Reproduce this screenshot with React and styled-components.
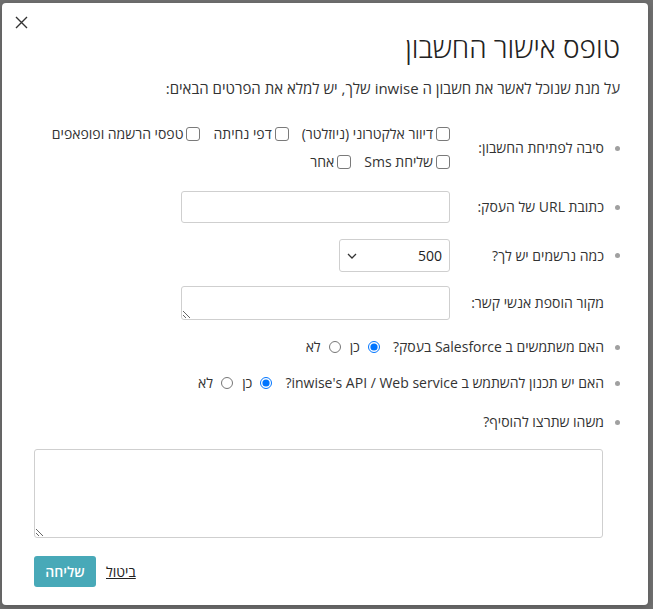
import React from "react";
import styled, { createGlobalStyle } from "styled-components";

const GlobalStyle = createGlobalStyle`
  html, body {
    margin: 0;
    padding: 0;
    background: #717171;
  }
  body {
    font-family: "Open Sans", "Liberation Sans", "DejaVu Sans", sans-serif;
    color: #333;
  }
`;

const Page = styled.div`
  padding: 3px 5px 5px 2px;
  min-height: 100vh;
  box-sizing: border-box;
`;

const Modal = styled.div`
  direction: rtl;
  background: #fff;
  border-radius: 4px;
  box-shadow: 0 2px 8px rgba(0, 0, 0, 0.25);
`;

const Header = styled.div`
  display: flex;
  justify-content: flex-end;
  padding: 12px 12px 0;
`;

const CloseButton = styled.button`
  display: flex;
  align-items: center;
  justify-content: center;
  width: 14px;
  height: 14px;
  padding: 0;
  border: none;
  background: none;
  cursor: pointer;
`;

const Body = styled.div`
  padding: 0 28px 18px 32px;
`;

const Title = styled.h2`
  margin: 3px 0 0;
  font-size: 28px;
  line-height: 31px;
  font-weight: 300;
  color: #222;
`;

const Intro = styled.p`
  margin: 15px 0 0;
  font-size: 15px;
  line-height: 20px;
  color: #333;
`;

const FieldList = styled.ul`
  list-style: none;
  margin: 26px 0 0;
  padding: 0;
`;

const Item = styled.li`
  display: flex;
  align-items: center;
  margin-bottom: ${(p) => p.$gap ?? 16}px;
  font-size: 14px;
`;

const Bullet = styled.span`
  flex-shrink: 0;
  width: 5px;
  height: 5px;
  border-radius: 50%;
  background: #a0a0a0;
  margin-left: 11px;
  visibility: ${(p) => (p.$hidden ? "hidden" : "visible")};
`;

const Label = styled.span`
  flex-shrink: 0;
  width: 148px;
  margin-left: 6px;
  line-height: 20px;
`;

const InlineLabel = styled.span`
  line-height: 20px;
`;

const CheckGroup = styled.div`
  display: flex;
  flex-direction: column;
  gap: 8px;
`;

const CheckRow = styled.div`
  display: flex;
  gap: 13px;
`;

const Option = styled.label`
  display: inline-flex;
  align-items: center;
  gap: 3px;
  line-height: 20px;
  white-space: nowrap;
`;

const CheckBox = styled.input.attrs({ type: "checkbox" })`
  appearance: none;
  width: 14px;
  height: 14px;
  margin: 0;
  border: 1px solid #7a7a7a;
  border-radius: 3px;
  background: #fff;
  box-sizing: border-box;
`;

const RadioGroup = styled.div`
  display: flex;
  gap: 9px;
  margin-right: 13px;
`;

const Radio = styled.input.attrs({ type: "radio" })`
  width: 12px;
  height: 12px;
  margin: 0 0 0 5px;
`;

const TextInput = styled.input`
  width: 269px;
  height: 32px;
  box-sizing: border-box;
  border: 1px solid #cfcfcf;
  border-radius: 3px;
  padding: 0 8px;
  font: inherit;
`;

const SelectBox = styled.div`
  display: flex;
  align-items: center;
  justify-content: space-between;
  width: 111px;
  height: 33px;
  box-sizing: border-box;
  border: 1px solid #cfcfcf;
  border-radius: 3px;
  padding: 0 7px 0 7px;
  font-size: 14px;
  color: #222;
`;

const SmallArea = styled.textarea`
  width: 269px;
  height: 34px;
  box-sizing: border-box;
  border: 1px solid #cfcfcf;
  border-radius: 3px;
  padding: 4px 8px;
  font: inherit;
`;

const BigArea = styled.textarea`
  display: block;
  width: calc(100% - 17px);
  height: 89px;
  margin: 0 17px 0 0;
  box-sizing: border-box;
  border: 1px solid #cfcfcf;
  border-radius: 3px;
  padding: 6px 8px;
  font: inherit;
`;

const Footer = styled.div`
  display: flex;
  justify-content: flex-end;
  align-items: center;
  gap: 10px;
  margin-top: 18px;
`;

const CancelLink = styled.a`
  font-size: 14px;
  color: #222;
  text-decoration: underline;
  cursor: pointer;
`;

const SubmitButton = styled.button`
  width: 62px;
  height: 31px;
  border: none;
  border-radius: 3px;
  background: #48a9b8;
  color: #fff;
  font: inherit;
  font-size: 14px;
  font-weight: 600;
  cursor: pointer;
`;

const CloseIcon = () => (
  <svg width="13" height="13" viewBox="0 0 13 13">
    <path d="M1 1 L12 12 M12 1 L1 12" stroke="#333" strokeWidth="1.4" fill="none" />
  </svg>
);

const Chevron = () => (
  <svg width="10" height="6" viewBox="0 0 10 6">
    <path d="M1 1 L5 5 L9 1" stroke="#333" strokeWidth="1.3" fill="none" />
  </svg>
);

const YesNo = ({ name }) => (
  <RadioGroup>
    <Option>
      <Radio name={name} defaultChecked />
      כן
    </Option>
    <Option>
      <Radio name={name} />
      לא
    </Option>
  </RadioGroup>
);

export default function App() {
  return (
    <>
      <GlobalStyle />
      <Page>
        <Modal>
          <Header>
            <CloseButton aria-label="סגירה">
              <CloseIcon />
            </CloseButton>
          </Header>
          <Body>
            <Title>טופס אישור החשבון</Title>
            <Intro>על מנת שנוכל לאשר את חשבון ה inwise שלך, יש למלא את הפרטים הבאים:</Intro>
            <FieldList>
              <Item $gap={19}>
                <Bullet />
                <Label>סיבה לפתיחת החשבון:</Label>
                <CheckGroup>
                  <CheckRow>
                    <Option>
                      <CheckBox />
                      דיוור אלקטרוני (ניוזלטר)
                    </Option>
                    <Option>
                      <CheckBox />
                      דפי נחיתה
                    </Option>
                    <Option>
                      <CheckBox />
                      טפסי הרשמה ופופאפים
                    </Option>
                  </CheckRow>
                  <CheckRow>
                    <Option>
                      <CheckBox />
                      שליחת Sms
                    </Option>
                    <Option>
                      <CheckBox />
                      אחר
                    </Option>
                  </CheckRow>
                </CheckGroup>
              </Item>
              <Item $gap={16}>
                <Bullet />
                <Label>כתובת URL של העסק:</Label>
                <TextInput type="text" />
              </Item>
              <Item $gap={14}>
                <Bullet />
                <Label>כמה נרשמים יש לך?</Label>
                <SelectBox>
                  <span>500</span>
                  <Chevron />
                </SelectBox>
              </Item>
              <Item $gap={17}>
                <Bullet $hidden />
                <Label>מקור הוספת אנשי קשר:</Label>
                <SmallArea />
              </Item>
              <Item>
                <Bullet />
                <InlineLabel>האם משתמשים ב Salesforce בעסק?</InlineLabel>
                <YesNo name="salesforce" />
              </Item>
              <Item $gap={19}>
                <Bullet />
                <InlineLabel>האם יש תכנון להשתמש ב inwise's API / Web service?</InlineLabel>
                <YesNo name="api" />
              </Item>
              <Item $gap={17}>
                <Bullet />
                <InlineLabel>משהו שתרצו להוסיף?</InlineLabel>
              </Item>
            </FieldList>
            <BigArea />
            <Footer>
              <CancelLink>ביטול</CancelLink>
              <SubmitButton>שליחה</SubmitButton>
            </Footer>
          </Body>
        </Modal>
      </Page>
    </>
  );
}
